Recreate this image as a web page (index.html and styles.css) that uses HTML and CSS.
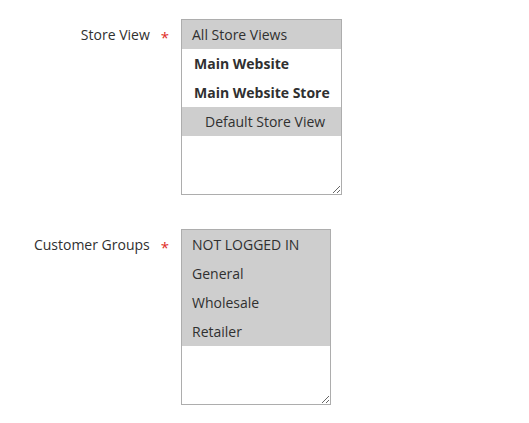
FILE: index.html
```html
<!DOCTYPE html>
<html>
<head>
<meta charset="utf-8">
<link rel="stylesheet" href="styles.css">
</head>
<body>
<form class="form">
  <div class="field">
    <div class="label"><span class="label-text">Store View</span><span class="required">*</span></div>
    <div class="multiselect store-view">
      <div class="option selected">All Store Views</div>
      <div class="group">Main Website</div>
      <div class="group">Main Website Store</div>
      <div class="option nested selected">Default Store View</div>
    </div>
  </div>
  <div class="field">
    <div class="label"><span class="label-text">Customer Groups</span><span class="required">*</span></div>
    <div class="multiselect customer-groups">
      <div class="option selected">NOT LOGGED IN</div>
      <div class="option selected">General</div>
      <div class="option selected">Wholesale</div>
      <div class="option selected">Retailer</div>
    </div>
  </div>
</form>
</body>
</html>
```

FILE: styles.css
```css
html, body {
  margin: 0;
  padding: 0;
  background: #ffffff;
}
body {
  font-family: "Open Sans", "Liberation Sans", sans-serif;
  font-size: 14px;
  color: #303030;
}
.form {
  display: flex;
  flex-direction: column;
  gap: 34px;
  padding-top: 19px;
}
.field {
  display: flex;
  align-items: flex-start;
}
.label {
  width: 181px;
  box-sizing: border-box;
  display: flex;
  justify-content: flex-end;
  align-items: flex-start;
  padding-right: 12px;
  padding-top: 6px;
  line-height: 20px;
  font-weight: 400;
  color: #303030;
}
.required {
  color: #e02b27;
  margin-left: 11px;
  font-weight: 400;
  font-size: 15px;
  padding-top: 2px;
}
.multiselect {
  box-sizing: border-box;
  height: 176px;
  border: 1px solid #adadad;
  background: #fff;
  overflow: auto;
  resize: both;
}
.store-view { width: 161px; }
.customer-groups { width: 150px; }
.option, .group {
  height: 29px;
  line-height: 29px;
  padding-left: 10px;
  white-space: nowrap;
  color: #303030;
}
.group {
  font-weight: 700;
  padding-left: 12px;
}
.option.nested {
  padding-left: 23px;
}
.option.selected {
  background: #cecece;
}
```
